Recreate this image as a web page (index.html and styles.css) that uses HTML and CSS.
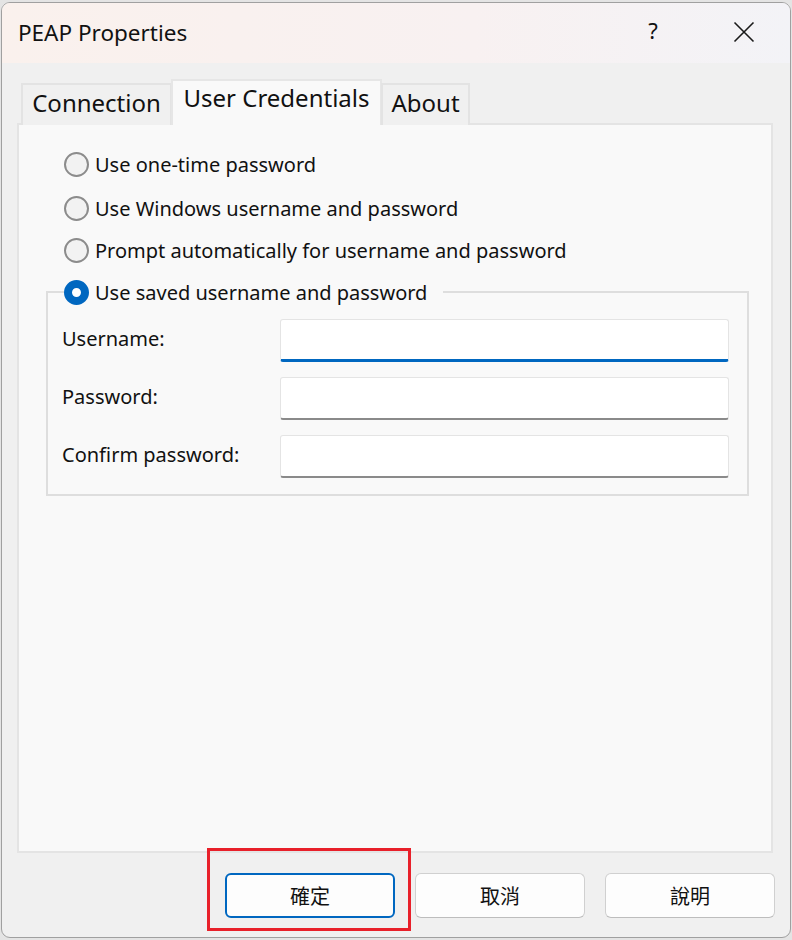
FILE: index.html
```html
<!DOCTYPE html>
<html>
<head>
<meta charset="utf-8">
<link rel="stylesheet" href="styles.css">
</head>
<body>
<div class="window">
  <div class="titlebar">
    <span class="title">PEAP Properties</span>
    <span class="help">?</span>
    <span class="close">
      <svg width="22" height="22" viewBox="0 0 22 22"><path d="M1.5 1.5 L20.5 20.5 M20.5 1.5 L1.5 20.5" stroke="#1a1a1a" stroke-width="1.6" fill="none"/></svg>
    </span>
  </div>
  <div class="body">
    <div class="tabs">
      <div class="tab tab-conn">Connection</div>
      <div class="tab tab-sel">User Credentials</div>
      <div class="tab tab-about">About</div>
    </div>
    <div class="panel">
      <div class="radio-row"><span class="radio"></span><span>Use one-time password</span></div>
      <div class="radio-row"><span class="radio"></span><span>Use Windows username and password</span></div>
      <div class="radio-row"><span class="radio"></span><span>Prompt automatically for username and password</span></div>
      <fieldset class="group">
        <legend class="radio-row legend"><span class="radio checked"></span><span>Use saved username and password</span></legend>
        <div class="field"><span class="label">Username:</span><span class="input focused"></span></div>
        <div class="field"><span class="label">Password:</span><span class="input"></span></div>
        <div class="field"><span class="label">Confirm password:</span><span class="input"></span></div>
      </fieldset>
    </div>
    <div class="buttons">
      <div class="btn default">確定</div>
      <div class="btn">取消</div>
      <div class="btn">說明</div>
    </div>
  </div>
  <div class="highlight"></div>
</div>
</body>
</html>
```

FILE: styles.css
```css
html, body {
  margin: 0;
  padding: 0;
}
body {
  background: #e4e4e4;
  width: 792px;
  height: 940px;
  overflow: hidden;
  font-family: "Noto Sans", "Open Sans", sans-serif;
  color: #111;
}
.window {
  position: relative;
  box-sizing: border-box;
  margin: 2px 0 0 1px;
  width: 790px;
  height: 936px;
  border: 1px solid #a0a0a0;
  border-radius: 9px;
  background: #f0f0f0;
  overflow: hidden;
  display: flex;
  flex-direction: column;
}
.titlebar {
  height: 60px;
  flex: none;
  display: flex;
  align-items: center;
  background: linear-gradient(90deg, #faf1ed 0%, #f8f1f1 60%, #f3f3f7 100%);
  padding-left: 16px;
}
.title {
  font-size: 22.5px;
  flex: 1;
  padding-bottom: 2px;
}
.help {
  font-size: 22px;
  width: 20px;
  text-align: center;
  margin-right: 70px;
  padding-bottom: 6px;
}
.close {
  width: 22px;
  height: 22px;
  margin-right: 35px;
  margin-bottom: 3px;
  display: flex;
}
.body {
  flex: 1;
  display: flex;
  flex-direction: column;
  padding: 16px 16px 0 15px;
}
.tabs {
  display: flex;
  align-items: flex-end;
  height: 46px;
  padding-left: 4px;
  position: relative;
  z-index: 1;
  margin-bottom: -2px;
}
.tab {
  box-sizing: border-box;
  height: 42px;
  border: 2px solid #e3e3e3;
  border-bottom: none;
  background: #f0f0f0;
  font-size: 24px;
  display: flex;
  align-items: center;
  justify-content: center;
  padding-bottom: 5px;
}
.tab-conn {
  width: 151px;
}
.tab-sel {
  width: 211px;
  height: 46px;
  margin-left: -1px;
  background: #f9f9f9;
  padding-bottom: 11px;
  border-color: #e6e6e6;
}
.tab-about {
  width: 89px;
  margin-left: -1px;
}
.panel {
  box-sizing: border-box;
  width: 756px;
  height: 730px;
  border: 2px solid #e4e4e4;
  background: #f9f9f9;
  padding: 25px 23px 0 27px;
}
.radio-row {
  display: flex;
  align-items: center;
  height: 28px;
  font-size: 20px;
  margin-bottom: 14px;
  margin-left: 18px;
}
.radio-row:first-child {
  margin-bottom: 16px;
}
.radio {
  box-sizing: border-box;
  width: 25px;
  height: 25px;
  border-radius: 50%;
  border: 2px solid #8c8c8c;
  background: #f2f2f2;
  margin-right: 6px;
  flex: none;
}
.radio.checked {
  border: 8.5px solid #0067c0;
  background: #ffffff;
}
.group {
  box-sizing: border-box;
  margin: 0;
  width: 703px;
  border: 2px solid #dedede;
  padding: 13px 17px 16px 14px;
}
.legend.radio-row {
  margin: 0 0 0 2px;
  padding: 0 16px 0 0;
}
.field {
  display: flex;
  align-items: center;
  height: 43px;
  margin-bottom: 15px;
}
.field:last-child {
  margin-bottom: 0;
}
.label {
  font-size: 20px;
  width: 218px;
  flex: none;
  padding-bottom: 4px;
}
.input {
  box-sizing: border-box;
  width: 449px;
  height: 43px;
  background: #fff;
  border: 1px solid #e4e4e4;
  border-bottom: 2px solid #8a8a8a;
  border-radius: 3px;
}
.input.focused {
  border-bottom: 3px solid #0067c0;
}
.buttons {
  display: flex;
  justify-content: flex-end;
  gap: 20px;
  margin-top: 20px;
  margin-right: -1px;
}
.btn {
  box-sizing: border-box;
  width: 170px;
  height: 45px;
  background: #fdfdfd;
  border: 1.5px solid #d0d0d0;
  border-bottom-color: #bdbdbd;
  border-radius: 6px;
  font-family: "Noto Sans CJK TC", sans-serif;
  font-size: 20px;
  display: flex;
  align-items: center;
  justify-content: center;
}
.btn.default {
  border: 2px solid #0067c0;
}
.highlight {
  position: absolute;
  left: 205px;
  top: 845px;
  width: 204px;
  height: 83px;
  box-sizing: border-box;
  border: 3px solid #e8202a;
}
```
